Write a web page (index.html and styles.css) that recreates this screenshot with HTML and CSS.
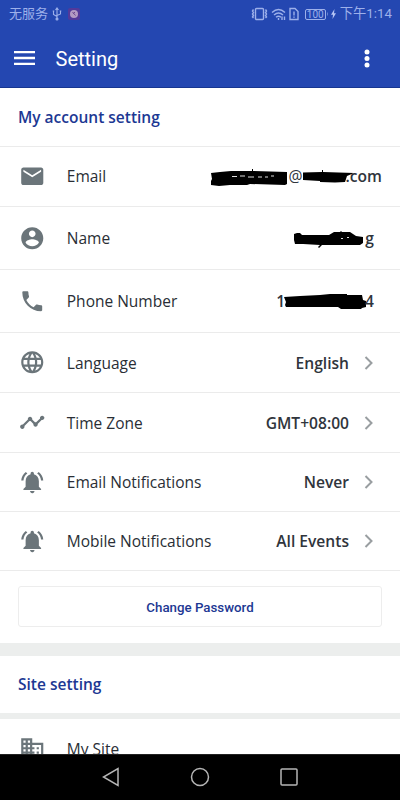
FILE: index.html
```html
<!DOCTYPE html>
<html lang="en">
<head>
  <meta charset="UTF-8">
  <meta name="viewport" content="width=device-width, initial-scale=1">
  <title>Setting</title>
  <link rel="stylesheet" href="styles.css">
</head>
<body>

<header>
  <div class="status-bar">
    <span class="carrier">无服务</span>
    <svg class="usb" width="10" height="14" viewBox="0 0 10 14" fill="none" stroke="#9db0ea" stroke-width="1.1"><path d="M5 1v11M1.500 4v3.500L5 9.500M8.500 4v3L5 8.500M3.500 3L5 1l1.500 2"/><circle cx="5" cy="12" r="1" fill="#9db0ea"/><path d="M.7 4h1.600M7.700 4h1.600"/></svg>
    <svg class="app-dot" width="12" height="12" viewBox="0 0 12 12"><rect width="12" height="12" rx="2" fill="#52399a"/><circle cx="6" cy="6" r="4" fill="#b49bc4"/><path d="M4.500 4l3 3.500M7 4l-2 2" stroke="#704b91"/></svg>
    <div class="status-right">
      <svg width="17" height="14" viewBox="0 0 17 14" fill="none" stroke="#9db0ea" stroke-width="1.400"><rect x="4.500" y="1.500" width="8" height="11" rx="1"/><path d="M2.500 2.500l-1 1.500 1 1.500-1 1.500 1 1.500-1 1.500 1 1M14.500 2.500l1 1.500-1 1.500 1 1.500-1 1.500 1 1.500-1 1"/></svg>
      <svg class="wifi" width="16" height="14" viewBox="0 0 16 14" fill="none" stroke="#9db0ea" stroke-width="1.400"><path d="M1 5.500q6.500-6 13 0M3 8q4.500-4 9 0M5 10.300q2.500-2 5 0"/><path d="M7.500 11v2M11 9.500v3.500M13.500 9.500v3.500"/></svg>
      <svg class="sim" width="10" height="14" viewBox="0 0 10 14" fill="none" stroke="#9db0ea" stroke-width="1.400"><path d="M1 1.500h5l3 3v8H1zM5 4.500v4M5 9.500v1.300"/></svg>
      <span class="battery">100</span>
      <svg class="bolt" width="8" height="12" viewBox="0 0 8 12"><path d="M.7 3v6" stroke="#9db0ea" stroke-width="1.300"/></svg>
      <svg class="charge" width="5" height="10" viewBox="0 0 5 10" fill="#b6c5f5"><path d="M3.500 0L0 5.700h2L1.500 10 5 4.300H3z"/></svg>
      <span class="time">下午1:14</span>
    </div>
  </div>
  <div class="toolbar">
    <svg width="21" height="14" viewBox="0 0 21 14" fill="#fff"><path d="M0 0h21v2.300H0zM0 5.850h21v2.300H0zM0 11.700h21V14H0z"/></svg>
    <h1>Setting</h1>
    <svg class="more" width="6" height="19" viewBox="0 0 6 19" fill="#fff"><circle cx="3" cy="3" r="2.500"/><circle cx="3" cy="9.500" r="2.500"/><circle cx="3" cy="16" r="2.500"/></svg>
  </div>
</header>

<main>
  <h2>My account setting</h2>

  <div class="row email-row">
    <svg class="icon" viewBox="0 0 24 24"><path d="M20 4H4c-1.100 0-1.990.9-1.990 2L2 18c0 1.100.9 2 2 2h16c1.100 0 2-.9 2-2V6c0-1.100-.9-2-2-2zm0 4l-8 5-8-5V6l8 5 8-5v2z"/></svg>
    <span class="label">Email</span>
    <span class="value">
      <svg class="scribble-host" width="78" height="18" viewBox="211 168 78 18"><path d="M211 174l9-1 11-1 21 0v-2h1v2l34 1v12l-2 1-35-1-3 1-17 0-11 1-8-1 0-4 1-2z"/><path d="M232 177.500h5m3-.5h5m3 1h6m4 0h4m3 0h3m3-1h3" stroke="#ddd" fill="none"/></svg><span class="at">@</span><svg class="scribble-host" width="43" height="18" viewBox="303 168 43 18"><path d="M303 173.500l19-.5v-2h1v2l31 1-7 3-2 6-10 .500-15-.500v-1l-17-1z"/></svg><span>.com</span>
    </span>
  </div>

  <div class="row tall inset">
    <svg class="icon" viewBox="0 0 24 24"><path d="M12 2C6.480 2 2 6.480 2 12s4.480 10 10 10 10-4.480 10-10S17.520 2 12 2zm0 3c1.660 0 3 1.340 3 3s-1.340 3-3 3-3-1.340-3-3 1.340-3 3-3zm0 14.200c-2.500 0-4.710-1.280-6-3.220.03-1.990 4-3.080 6-3.080 1.990 0 5.970 1.090 6 3.080-1.290 1.940-3.500 3.220-6 3.220z"/></svg>
    <span class="label">Name</span>
    <span class="value">
      <svg class="scribble-host" width="71" height="18" viewBox="294 229 71 18"><path d="M294 234l3-1 3 0 2 2h27l5-3 6 0 1-1 1 1h8l6 4 7 1v6l-3 2h-38l-3 3-1-1 2-2-17-1-8 0-1-4z"/><path d="M341 238.500h2m4-1h2" stroke="#ddd"/></svg><span>g</span>
    </span>
  </div>

  <div class="row tall inset">
    <svg class="icon" viewBox="0 0 24 24"><path d="M6.620 10.790c1.440 2.830 3.760 5.140 6.590 6.590l2.200-2.200c.27-.27.67-.36 1.020-.24 1.120.37 2.330.57 3.570.57.550 0 1 .45 1 1V20c0 .55-.45 1-1 1-9.390 0-17-7.610-17-17 0-.55.45-1 1-1h3.500c.55 0 1 .45 1 1 0 1.250.2 2.450.57 3.570.11.35.03.74-.25 1.020l-2.200 2.200z"/></svg>
    <span class="label">Phone Number</span>
    <span class="value">
      <span>1</span><svg class="scribble-host" width="80" height="18" viewBox="285 292 80 18"><path d="M284 297l16-1 20-1 10-1h17v1h15l1 5 3 1v6l-4 1-1 1h-20l-3-2-52 0-1-2 1-3z"/></svg><span>4</span>
    </span>
  </div>

  <div class="row">
    <svg class="icon" viewBox="0 0 24 24"><path d="M11.990 2C6.470 2 2 6.480 2 12s4.470 10 9.990 10C17.520 22 22 17.520 22 12S17.520 2 11.990 2zm6.930 6h-2.950c-.32-1.250-.78-2.450-1.380-3.560 1.840.63 3.370 1.910 4.330 3.560zM12 4.040c.83 1.200 1.480 2.530 1.910 3.960h-3.820c.43-1.430 1.080-2.760 1.910-3.960zM4.260 14C4.100 13.360 4 12.690 4 12s.1-1.360.26-2h3.380c-.08.660-.14 1.320-.14 2s.06 1.340.14 2H4.260zm.82 2h2.950c.32 1.250.78 2.450 1.380 3.560-1.840-.63-3.370-1.900-4.330-3.560zm2.950-8H5.080c.96-1.660 2.490-2.930 4.330-3.560C8.810 5.550 8.350 6.750 8.030 8zM12 19.960c-.83-1.200-1.480-2.530-1.910-3.960h3.820c-.43 1.430-1.080 2.760-1.910 3.960zM14.340 14H9.660c-.09-.66-.16-1.320-.16-2s.07-1.350.16-2h4.680c.09.65.16 1.320.16 2s-.07 1.340-.16 2zm.25 5.560c.6-1.110 1.060-2.310 1.380-3.560h2.950c-.96 1.650-2.490 2.930-4.330 3.560zM16.360 14c.08-.66.14-1.320.14-2s-.06-1.340-.14-2h3.380c.16.64.26 1.310.26 2s-.1 1.360-.26 2h-3.380z"/></svg>
    <span class="label">Language</span>
    <span class="value">English</span>
    <svg class="chevron" viewBox="0 0 8 14"><path d="M1 1l6 6-6 6"/></svg>
  </div>

  <div class="row">
    <svg class="icon" viewBox="0 0 24 24"><path d="M23 8c0 1.100-.9 2-2 2-.18 0-.35-.02-.51-.07l-3.560 3.550c.05.160.07.340.07.520 0 1.100-.9 2-2 2s-2-.9-2-2c0-.18.02-.36.07-.52l-2.550-2.550c-.16.05-.34.070-.52.070s-.36-.02-.52-.07l-4.550 4.560c.05.160.07.330.07.510 0 1.100-.9 2-2 2s-2-.9-2-2 .9-2 2-2c.18 0 .35.020.51.070l4.560-4.550C8.020 9.360 8 9.180 8 9c0-1.100.9-2 2-2s2 .9 2 2c0 .18-.02.36-.07.52l2.550 2.550c.16-.05.34-.07.52-.07s.36.020.52.070l3.550-3.560C19.020 8.350 19 8.180 19 8c0-1.100.9-2 2-2s2 .9 2 2z"/></svg>
    <span class="label">Time Zone</span>
    <span class="value">GMT+08:00</span>
    <svg class="chevron" viewBox="0 0 8 14"><path d="M1 1l6 6-6 6"/></svg>
  </div>

  <div class="row short">
    <svg class="icon" viewBox="0 0 24 24"><path d="M7.580 4.080L6.150 2.650C3.750 4.480 2.170 7.300 2.030 10.500h2c.15-2.650 1.510-4.970 3.550-6.420zm12.390 6.420h2c-.15-3.200-1.730-6.020-4.120-7.850l-1.420 1.430c2.020 1.450 3.390 3.770 3.540 6.420zM18 11c0-3.070-1.640-5.640-4.500-6.320V4c0-.83-.67-1.500-1.500-1.500s-1.500.67-1.500 1.500v.68C7.630 5.360 6 7.920 6 11v5l-2 2v1h16v-1l-2-2v-5zm-6 11c.14 0 .27-.01.400-.04.65-.14 1.180-.58 1.440-1.180.1-.24.150-.5.150-.78h-4c.01 1.100.9 2 2.010 2z"/></svg>
    <span class="label">Email Notifications</span>
    <span class="value">Never</span>
    <svg class="chevron" viewBox="0 0 8 14"><path d="M1 1l6 6-6 6"/></svg>
  </div>

  <div class="row short">
    <svg class="icon" viewBox="0 0 24 24"><path d="M7.580 4.080L6.150 2.650C3.750 4.480 2.170 7.300 2.030 10.500h2c.15-2.650 1.510-4.970 3.550-6.420zm12.390 6.420h2c-.15-3.200-1.730-6.020-4.120-7.850l-1.420 1.430c2.020 1.450 3.390 3.770 3.540 6.420zM18 11c0-3.070-1.640-5.640-4.500-6.320V4c0-.83-.67-1.500-1.500-1.500s-1.500.67-1.500 1.500v.68C7.630 5.360 6 7.920 6 11v5l-2 2v1h16v-1l-2-2v-5zm-6 11c.14 0 .27-.01.400-.04.65-.14 1.180-.58 1.440-1.180.1-.24.150-.5.150-.78h-4c.01 1.100.9 2 2.010 2z"/></svg>
    <span class="label">Mobile Notifications</span>
    <span class="value">All Events</span>
    <svg class="chevron" viewBox="0 0 8 14"><path d="M1 1l6 6-6 6"/></svg>
  </div>

  <div class="password">
    <button type="button">Change Password</button>
  </div>

  <h2 class="site-title">Site setting</h2>

  <div class="row site-row">
    <svg class="icon" viewBox="0 0 24 24"><path d="M12 7V3H2v18h20V7H12zM6 19H4v-2h2v2zm0-4H4v-2h2v2zm0-4H4V9h2v2zm0-4H4V5h2v2zm4 12H8v-2h2v2zm0-4H8v-2h2v2zm0-4H8V9h2v2zm0-4H8V5h2v2zm10 12h-8v-2h2v-2h-2v-2h2v-2h-2V9h8v10zm-2-8h-2v2h2v-2zm0 4h-2v2h2v-2z"/></svg>
    <span class="label">My Site</span>
  </div>
</main>

<nav>
  <svg width="18" height="20" viewBox="0 0 18 20"><path d="M16 1.500v17L1.500 10z"/></svg>
  <svg width="20" height="20" viewBox="0 0 20 20"><circle cx="10" cy="10" r="8.500"/></svg>
  <svg width="18" height="18" viewBox="0 0 18 18"><rect x="1" y="1" width="16" height="16" rx="1"/></svg>
</nav>

</body>
</html>
```
FILE: styles.css
```css
* { margin: 0; padding: 0; box-sizing: border-box; }
body {
  font-family: "Open Sans", "Noto Sans CJK SC", sans-serif;
  background: white;
  color: #292e35;
  height: 800px;
  display: flex;
  flex-direction: column;
  overflow: hidden;
}
svg {
  display: block;
  flex: none;
}
header {
  height: 88px;
  background: #2447b1;
  border-bottom: 1px solid #173690;
  flex: none;
}
.status-bar {
  height: 28px;
  display: flex;
  align-items: center;
  padding: 0 8px 0 9px;
  color: #9db0ea;
  font-family: Roboto, "Noto Sans CJK SC", sans-serif;
  font-size: 13px;
  line-height: 28px;
}
.usb { margin-left: 4px; }
.app-dot { margin-left: 6px; }
.status-right {
  margin-left: auto;
  display: flex;
  align-items: center;
}
.wifi { margin-left: 3px; }
.sim { margin-left: 2px; }
.battery {
  margin-left: 6px;
  width: 21px;
  height: 11px;
  border: 1px solid #9db0ea;
  border-radius: 2px;
  font-size: 10px;
  line-height: 10px;
  text-align: center;
}
.bolt {
  margin-left: 1px;
  width: 4px;
}
.charge { margin-right: 4px; }
.time { font-size: 13.3px; }
.toolbar {
  height: 60px;
  padding: 0 30px 0 14px;
  display: flex;
  align-items: center;
}
h1 {
  margin-left: 20.5px;
  padding-top: 1px;
  font-family: Roboto, sans-serif;
  font-size: 20px;
  font-weight: 400;
  color: white;
}
.more { margin-left: auto; }
main {
  flex: 1;
  min-height: 0;
  overflow: hidden;
}
h2 {
  height: 59px;
  padding-left: 18px;
  border-bottom: 1px solid #ebebeb;
  font-size: 15.5px;
  font-weight: 600;
  line-height: 58px;
  color: #1c3893;
}
.row {
  height: 60px;
  padding: 0 18px 0 19px;
  border-bottom: 1px solid #ebebeb;
  display: flex;
  align-items: center;
}
.row.tall { height: 63px; }
.row.short { height: 59px; }
.row.inset { padding-right: 26px; }
.email-row { padding-bottom: 1px; }
.icon {
  width: 26.5px;
  height: 26.5px;
  fill: #6b757a;
}
.label {
  margin-left: 21.3px;
  font-size: 15.5px;
  line-height: 20px;
}
.value {
  margin-left: auto;
  display: flex;
  align-items: center;
  font-size: 15.6px;
  font-weight: 600;
  line-height: 20px;
  color: #30353c;
}
.scribble-host { overflow: visible; }
.at { font-weight: 400; }
.chevron {
  width: 9px;
  height: 14px;
  margin: 0 9px 0 15px;
  fill: none;
  stroke: #999ea1;
  stroke-width: 2;
}
.password {
  height: 85px;
  padding: 15px 18px 0;
  border-bottom: 13px solid #eceeed;
}
button {
  display: block;
  width: 100%;
  height: 41px;
  padding-top: 2px;
  background: white;
  border: 1px solid #ededed;
  border-radius: 3px;
  color: #1c3893;
  font-family: Roboto, sans-serif;
  font-size: 13.3px;
  font-weight: 500;
}
.site-title {
  height: 63px;
  border-bottom: 6px solid #eceeed;
  line-height: 57px;
}
.site-row {
  height: 59px;
  border-bottom: none;
}
nav {
  height: 46px;
  background: black;
  border-top: 1px solid #222;
  padding-bottom: 1px;
  flex: none;
  display: flex;
  align-items: center;
  justify-content: center;
  gap: 70px;
}
nav svg {
  fill: none;
  stroke: #b5b5b5;
  stroke-width: 1.5;
}
```
